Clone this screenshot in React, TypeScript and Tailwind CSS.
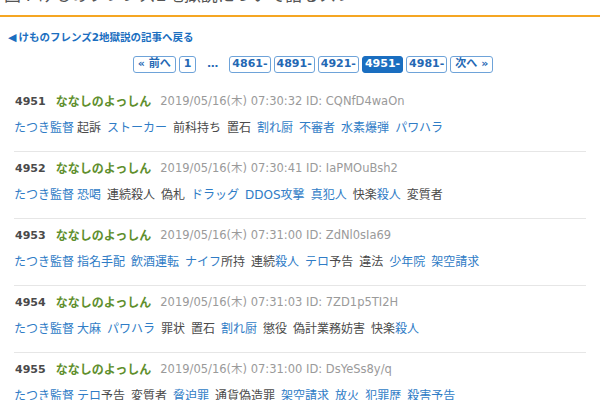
import React from "react";

type Post = { no: number; time: string; id: string; tags: string[] };

const posts: Post[] = [
  {
    no: 4951,
    time: "07:30:32",
    id: "CQNfD4waOn",
    tags: ["[たつき監督]", "起訴", "[ストーカー]", "前科持ち", "置石", "[割れ厨]", "[不審者]", "[水素爆弾]", "[パワハラ]"],
  },
  {
    no: 4952,
    time: "07:30:41",
    id: "IaPMOuBsh2",
    tags: ["[たつき監督]", "[恐喝]", "連続殺人", "偽札", "[ドラッグ]", "[DDOS攻撃]", "[真犯人]", "快楽[殺人]", "変質者"],
  },
  {
    no: 4953,
    time: "07:31:00",
    id: "ZdNl0sIa69",
    tags: ["[たつき監督]", "[指名手配]", "[飲酒運転]", "[ナイフ]所持", "連続[殺人]", "[テロ]予告", "違法", "[少年院]", "[架空請求]"],
  },
  {
    no: 4954,
    time: "07:31:03",
    id: "7ZD1p5TI2H",
    tags: ["[たつき監督]", "[大麻]", "[パワハラ]", "罪状", "置石", "[割れ厨]", "懲役", "偽計業務妨害", "快楽[殺人]"],
  },
  {
    no: 4955,
    time: "07:31:00",
    id: "DsYeSs8y/q",
    tags: ["[たつき監督]", "[テロ]予告", "変質者", "[脅迫罪]", "通貨偽造罪", "[架空請求]", "[放火]", "[犯罪歴]", "[殺害予告]"],
  },
];

const pages = ["4861-", "4891-", "4921-", "4951-", "4981-"];

function Tag({ text }: { text: string }) {
  const parts = text.split(/(\[[^\]]+\])/).filter(Boolean);
  return (
    <span>
      {parts.map((p, i) =>
        p.startsWith("[") ? (
          <span key={i} className="text-[#2f7cc6]">
            {p.slice(1, -1)}
          </span>
        ) : (
          <span key={i} className="text-[#4a4a4a]">
            {p}
          </span>
        )
      )}
    </span>
  );
}

function PostRow({ post, first }: { post: Post; first: boolean }) {
  return (
    <div className={`mx-[14px] pt-[8px] pb-[14px] ${first ? "" : "border-t border-[#e6e6e6]"}`}>
      <div className="flex items-center h-[18px] pl-[1px] whitespace-nowrap">
        <span className="font-bold text-[11px] text-[#4a4a4a] mr-[10px]">{post.no}</span>
        <span className="font-bold text-[12px] text-[#5f8f2e] mr-[9px]">ななしのよっしん</span>
        <span className="text-[11.5px] text-[#9a9a9a]">
          2019/05/16(木) {post.time} ID: {post.id}
        </span>
      </div>
      <div className="flex items-center h-[18px] mt-[8px] text-[12px] whitespace-nowrap">
        {post.tags.map((t, i) => (
          <span key={i} className={i === 0 ? "mr-[3px]" : "mr-[6px]"}>
            <Tag text={t} />
          </span>
        ))}
      </div>
    </div>
  );
}

export default function App() {
  return (
    <div className="w-[600px] h-[400px] overflow-hidden bg-white font-['DejaVu_Sans','Noto_Sans_CJK_JP',sans-serif]">
      <div className="border-b-2 border-[#f5a623] pb-[10px]">
        <h1 className="-mt-[15px] pl-[4px] text-[17px] leading-[20px] text-[#555] whitespace-nowrap">
          図4 けものフレンズ2地獄説について語るスレ
        </h1>
      </div>
      <div className="mt-[14px] pl-[8px] h-[14px] flex items-center text-[10.5px] font-bold text-[#1a6ec0] whitespace-nowrap">
        <span className="text-[11px] mr-[2px]">◀</span>
        けものフレンズ2地獄説の記事へ戻る
      </div>
      <div className="mt-[11px] flex items-center justify-center pl-[26px] gap-[3px] text-[11px] font-bold">
        <span className="h-[17px] px-[4px] flex items-center border border-[#6ea3d9] rounded-[3px] text-[#2468b4]">
          « 前へ
        </span>
        <span className="h-[17px] px-[4px] flex items-center border border-[#6ea3d9] rounded-[3px] text-[#2468b4]">
          1
        </span>
        <span className="px-[8px] text-[#2468b4]">…</span>
        {pages.map((p) => (
          <span
            key={p}
            className={`h-[17px] px-[2px] flex items-center border rounded-[3px] ${
              p === "4951-"
                ? "bg-[#1a6ec0] border-[#1a6ec0] text-white"
                : "border-[#6ea3d9] text-[#2468b4]"
            }`}
          >
            {p}
          </span>
        ))}
        <span className="h-[17px] px-[4px] flex items-center border border-[#6ea3d9] rounded-[3px] text-[#2468b4]">
          次へ »
        </span>
      </div>
      <div className="mt-[12px]">
        {posts.map((p, i) => (
          <PostRow key={p.no} post={p} first={i === 0} />
        ))}
      </div>
    </div>
  );
}
